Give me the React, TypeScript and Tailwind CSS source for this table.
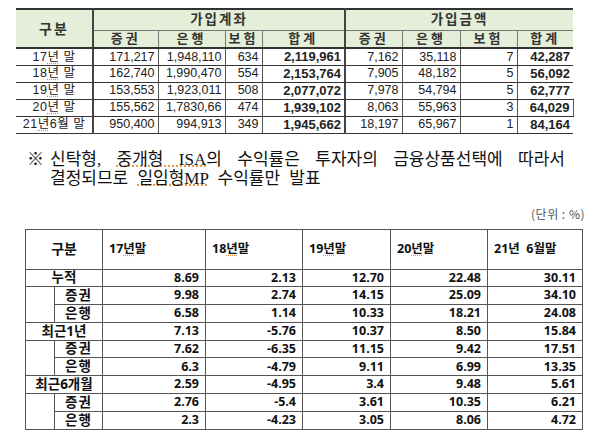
const accounts = [
  { label: "17년 말", a: ["171,217", "1,948,110", "634", "2,119,961"], b: ["7,162", "35,118", "7", "42,287"] },
  { label: "18년 말", a: ["162,740", "1,990,470", "554", "2,153,764"], b: ["7,905", "48,182", "5", "56,092"] },
  { label: "19년 말", a: ["153,553", "1,923,011", "508", "2,077,072"], b: ["7,978", "54,794", "5", "62,777"] },
  { label: "20년 말", a: ["155,562", "1,7830,66", "474", "1,939,102"], b: ["8,063", "55,963", "3", "64,029"] },
  { label: "21년6월 말", a: ["950,400", "994,913", "349", "1,945,662"], b: ["18,197", "65,967", "1", "84,164"] },
];

type ReturnRow = { label: string; sub?: boolean; group?: boolean; v: string[] };

const returns: ReturnRow[] = [
  { label: "누적", v: ["8.69", "2.13", "12.70", "22.48", "30.11"] },
  { label: "증권", sub: true, group: true, v: ["9.98", "2.74", "14.15", "25.09", "34.10"] },
  { label: "은행", sub: true, v: ["6.58", "1.14", "10.33", "18.21", "24.08"] },
  { label: "최근1년", v: ["7.13", "-5.76", "10.37", "8.50", "15.84"] },
  { label: "증권", sub: true, group: true, v: ["7.62", "-6.35", "11.15", "9.42", "17.51"] },
  { label: "은행", sub: true, v: ["6.3", "-4.79", "9.11", "6.99", "13.35"] },
  { label: "최근6개월", v: ["2.59", "-4.95", "3.4", "9.48", "5.61"] },
  { label: "증권", sub: true, group: true, v: ["2.76", "-5.4", "3.61", "10.35", "6.21"] },
  { label: "은행", sub: true, v: ["2.3", "-4.23", "3.05", "8.06", "4.72"] },
];

function YearLabel({ text }: { text: string }) {
  // squiggly spell-check underline under the "년 말" part
  const [head, tail] = text.split("년");
  return (
    <span>
      {head}
      <span className="underline decoration-dotted decoration-[#e0892f] underline-offset-2">년</span>
      {tail}
    </span>
  );
}

export default function App() {
  const cell = "border border-[#555] p-0 leading-none";
  const num = `${cell} text-right pr-[6px]`;

  return (
    <div
      className="w-[600px] h-[440px] bg-white overflow-hidden text-[#222]"
      style={{ fontFamily: '"Liberation Sans", "Noto Sans CJK KR", sans-serif' }}
    >
      {/* 가입계좌 / 가입금액 */}
      <div className="pt-[8px] pl-[16px]">
        <table className="border-collapse table-fixed w-[557px] text-[12.5px] leading-none">
          <colgroup>
            <col className="w-[77px]" />
            <col className="w-[65px]" />
            <col className="w-[67px]" />
            <col className="w-[37px]" />
            <col className="w-[83px]" />
            <col className="w-[57px]" />
            <col className="w-[58px]" />
            <col className="w-[57px]" />
            <col className="w-[56px]" />
          </colgroup>
          <thead className="bg-[#e4eed8] text-[#333] font-bold">
            <tr className="h-[21px]">
              <th
                rowSpan={2}
                className="p-0 border-t-2 border-t-[#333] border-b-2 border-b-[#333] border-r-2 border-r-[#444] text-[14px] tracking-[2px]"
              >
                구분
              </th>
              <th colSpan={4} className="p-0 border-t-2 border-t-[#333] border-b border-b-[#777] border-r-2 border-r-[#444] text-[13.5px] tracking-[2px]">
                가입계좌
              </th>
              <th colSpan={4} className="p-0 border-t-2 border-t-[#333] border-b border-b-[#777] text-[13.5px] tracking-[2px]">
                가입금액
              </th>
            </tr>
            <tr className="h-[18px] text-[13px]">
              {["증권", "은행", "보험", "합계", "증권", "은행", "보험", "합계"].map((h, i) => (
                <th
                  key={i}
                  className={`p-0 border-b-2 border-b-[#333] border-l border-l-[#777] tracking-[3px] font-bold ${
                    i === 3 ? "border-r-2 border-r-[#444]" : ""
                  }`}
                >
                  {h}
                </th>
              ))}
            </tr>
          </thead>
          <tbody>
            {accounts.map((r, ri) => (
              <tr key={r.label} className="h-[17px]">
                <td className="p-0 border-b border-b-[#333] border-r-2 border-r-[#444] text-center tracking-[0.5px]">
                  <YearLabel text={r.label} />
                </td>
                {r.a.map((v, i) => (
                  <td
                    key={i}
                    className={`p-0 border-b border-b-[#333] border-l border-l-[#555] text-right pr-[3px] ${
                      i === 3 ? "font-bold border-r-2 border-r-[#444] text-[13px]" : ""
                    }`}
                  >
                    {v}
                  </td>
                ))}
                {r.b.map((v, i) => (
                  <td
                    key={i}
                    className={`p-0 border-b border-b-[#333] border-l border-l-[#555] text-right pr-[3px] ${
                      i === 3 ? "font-bold text-[13px]" : ""
                    } ${ri === 3 && i === 3 ? "border-r border-r-[#555]" : ""}`}
                  >
                    {v}
                  </td>
                ))}
              </tr>
            ))}
          </tbody>
        </table>
      </div>

      {/* 안내 문구 */}
      <div
        className="flex mt-[16px] pl-[27px] text-[17px] leading-[19px] text-[#111]"
        style={{ fontFamily: '"Liberation Serif", "Noto Sans CJK KR", serif' }}
      >
        <span className="w-[23px] shrink-0 font-bold">※</span>
        <div className="w-[515px]">
          <p className="text-justify [text-align-last:justify]">
            신탁형, <span className="underline decoration-dotted decoration-[#e0892f]">중개형 ISA</span>의 수익률은
            투자자의 금융상품선택에 따라서
          </p>
          <p className="[word-spacing:5px]">
            결정되므로 <span className="underline decoration-dotted decoration-[#e0892f]">일임형MP</span> 수익률만 발표
          </p>
        </div>
      </div>

      <div
        className="w-[585px] text-right mt-[18px] text-[12px] leading-[16px] text-[#555] tracking-[0.5px]"
        style={{ fontFamily: '"Noto Sans CJK KR", sans-serif' }}
      >
        (단위 : %)
      </div>

      {/* 수익률 */}
      <div className="pl-[25px] mt-[7px]">
        <table
          className="border-collapse table-fixed w-[557px] text-[12.5px] font-bold text-[#111] border border-[#333] leading-none"
          style={{ fontFamily: '"Open Sans", "Noto Sans CJK KR", sans-serif' }}
        >
          <colgroup>
            <col className="w-[29px]" />
            <col className="w-[48px]" />
            <col className="w-[103px]" />
            <col className="w-[97px]" />
            <col className="w-[88px]" />
            <col className="w-[97px]" />
            <col className="w-[95px]" />
          </colgroup>
          <thead>
            <tr className="h-[40px]">
              <th colSpan={2} className={`${cell} text-center text-[14px]`}>
                구분
              </th>
              {["17년말", "18년말", "19년말", "20년말"].map((h) => (
                <th key={h} className={`${cell} text-left pl-[6px]`}>
                  <YearLabel text={h} />
                </th>
              ))}
              <th className={`${cell} text-left pl-[6px] whitespace-pre`}>21년  6월말</th>
            </tr>
          </thead>
          <tbody>
            {returns.map((r, ri) => (
              <tr key={ri} className="h-[17.8px]">
                {!r.sub && (
                  <td colSpan={2} className={`${cell} text-center text-[13.5px]`}>
                    {r.label}
                  </td>
                )}
                {r.group && <td rowSpan={2} className={cell} />}
                {r.sub && <td className={`${cell} text-center text-[13.5px] tracking-[1px]`}>{r.label}</td>}
                {r.v.map((v, i) => (
                  <td key={i} className={num}>
                    {v}
                  </td>
                ))}
              </tr>
            ))}
          </tbody>
        </table>
      </div>
    </div>
  );
}
